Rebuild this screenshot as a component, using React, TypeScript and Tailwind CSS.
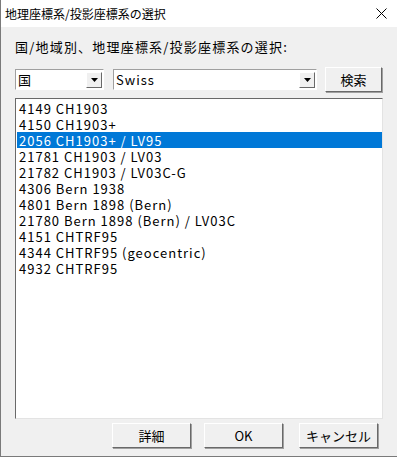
const items = [
  "4149 CH1903",
  "4150 CH1903+",
  "2056 CH1903+ / LV95",
  "21781 CH1903 / LV03",
  "21782 CH1903 / LV03C-G",
  "4306 Bern 1938",
  "4801 Bern 1898 (Bern)",
  "21780 Bern 1898 (Bern) / LV03C",
  "4151 CHTRF95",
  "4344 CHTRF95 (geocentric)",
  "4932 CHTRF95",
];

const font = { fontFamily: '"Noto Sans CJK JP", "Liberation Sans", sans-serif' };

function DropArrow() {
  return (
    <div className="flex h-[16px] w-[16px] items-center justify-center border border-t-white border-l-white border-r-[#696969] border-b-[#696969] bg-[#f0f0f0]">
      <svg width="7" height="4" viewBox="0 0 7 4">
        <path d="M0 0h7L3.5 4z" fill="#000" />
      </svg>
    </div>
  );
}

function Combo({ value, width }: { value: string; width: string }) {
  return (
    <div className={`flex h-[21px] items-center justify-between border border-t-[#a0a0a0] border-l-[#a0a0a0] border-r-white border-b-white bg-white pl-[2px] pr-[1px] ${width}`}>
      <span className="text-[13px] leading-none tracking-[1px] text-black">{value}</span>
      <DropArrow />
    </div>
  );
}

function Button({ label, className }: { label: string; className: string }) {
  return (
    <div className={`flex items-center justify-center border border-t-white border-l-white border-r-[#696969] border-b-[#696969] bg-[#f0f0f0] text-[13px] text-black shadow-[1px_1px_0_#a0a0a0] ${className}`}>
      {label}
    </div>
  );
}

export default function App() {
  return (
    <div className="flex h-[459px] w-[397px] flex-col bg-white" style={font}>
      <div className="flex h-[457px] flex-col border-l border-b border-[#7a7a7a] bg-[#f0f0f0]">
        <div className="flex h-[27px] items-center justify-between bg-white pl-[4px] pr-[10px]">
          <span className="text-[12px] text-black">地理座標系/投影座標系の選択</span>
          <svg width="11" height="11" viewBox="0 0 11 11">
            <path d="M0.5 0.5L10.5 10.5M10.5 0.5L0.5 10.5" stroke="#000" strokeWidth="1" />
          </svg>
        </div>
        <div className="flex flex-col px-[14px] pt-[12px]">
          <span className="text-[13px] leading-[16px] tracking-[1.2px] text-black">国/地域別、地理座標系/投影座標系の選択:</span>
          <div className="mt-[12px] flex items-center">
            <Combo value="国" width="w-[89px]" />
            <div className="ml-[9px]">
              <Combo value="Swiss" width="w-[204px]" />
            </div>
            <Button label="検索" className="ml-[8px] h-[25px] w-[57px]" />
          </div>
          <div className="mt-[6px] flex h-[321px] w-[368px] flex-col border border-t-[#696969] border-l-[#696969] border-r-[#e3e3e3] border-b-[#e3e3e3] bg-white py-[1px] pl-[1px]">
            {items.map((t, i) => (
              <div
                key={t}
                className={`flex h-[16px] items-center whitespace-nowrap pl-[2px] text-[13px] leading-none tracking-[1px] ${i === 2 ? "bg-[#0078d7] text-white" : "text-black"}`}
              >
                {t}
              </div>
            ))}
          </div>
          <div className="mt-[4px] flex items-center pl-[97px]">
            <Button label="詳細" className="h-[25px] w-[79px]" />
            <Button label="OK" className="ml-[13px] h-[25px] w-[79px]" />
            <Button label="キャンセル" className="ml-[16px] h-[25px] w-[79px]" />
          </div>
        </div>
      </div>
    </div>
  );
}
